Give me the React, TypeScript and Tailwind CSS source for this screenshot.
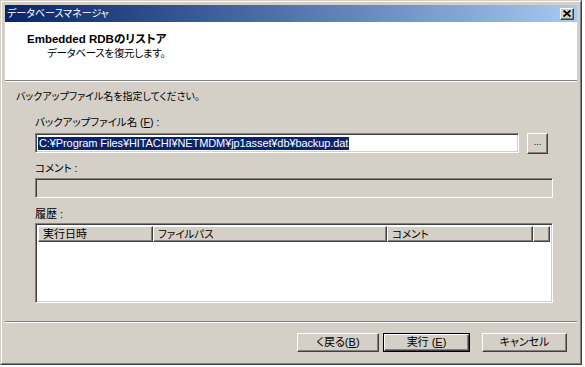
import React from 'react';

const font = "[font-family:'Liberation_Sans','Noto_Sans_CJK_JP',sans-serif] [font-feature-settings:'palt']";

const sunken =
  'border border-t-[#808080] border-l-[#808080] border-r-white border-b-white shadow-[inset_1px_1px_0_#404040,inset_-1px_-1px_0_#d4d0c8]';

const raised =
  'border border-t-white border-l-white border-r-[#404040] border-b-[#404040] shadow-[inset_-1px_-1px_0_#808080]';

const Key: React.FC<{ k: string }> = ({ k }) => <span className="underline underline-offset-1">{k}</span>;

const Button: React.FC<{ w: string; primary?: boolean; children: React.ReactNode }> = ({ w, primary, children }) => (
  <div className={`${w} h-[19px] ${primary ? 'border border-black' : ''}`}>
    <div className={`w-full h-full ${raised} bg-[#d4d0c8] flex items-center justify-center text-[11px] leading-none`}>
      {children}
    </div>
  </div>
);

const App: React.FC = () => {
  return (
    <div className={`w-[585px] h-[367px] bg-white ${font} text-black`}>
      {/* window frame */}
      <div className="w-[582px] h-[365px] border border-t-[#d4d0c8] border-l-[#d4d0c8] border-r-[#404040] border-b-[#404040]">
        <div className="w-full h-full border border-t-white border-l-white border-r-[#808080] border-b-[#808080] bg-[#d4d0c8] p-[3px] flex flex-col">
          {/* title bar */}
          <div className="h-[17px] bg-linear-to-r from-[#0a246a] to-[#a6caf0] flex items-center justify-between pl-[2px] pr-[3px]">
            <span className="text-white text-[10px] leading-none">データベースマネージャ</span>
            <div className={`w-[14px] h-[12px] ${raised} bg-[#d4d0c8] flex items-center justify-center`}>
              <svg width="8" height="7" viewBox="0 0 8 7">
                <path d="M0.5 0.5 L7.5 6.5 M7.5 0.5 L0.5 6.5" stroke="#000" strokeWidth="1.8" />
              </svg>
            </div>
          </div>

          {/* header */}
          <div className="h-[58px] bg-white pl-[22px] pt-[10px]">
            <div className="text-[11.5px] font-bold leading-[14px]">Embedded RDBのリストア</div>
            <div className="text-[10.5px] leading-[14px] pl-[20px] tracking-[-0.3px]">データベースを復元します。</div>
          </div>
          <div className="h-px bg-[#808080]" />
          <div className="h-px bg-white" />

          {/* body */}
          <div className="h-[239px] pl-[11px] pt-[8px]">
            <div className="text-[10px] leading-[14px]">バックアップファイル名を指定してください。</div>
            <div className="pl-[19px]">
              <div className="text-[10.5px] leading-[14px] mt-[11px]">
                バックアップファイル名 (<Key k="F" />) :
              </div>
              <div className="flex items-start gap-[8px] mt-[4px]">
                <div className={`w-[484px] h-[20px] bg-white ${sunken} flex items-center pl-[2px]`}>
                  <span className="bg-[#0a246a] text-white text-[11px] leading-[13px] px-px [font-family:'Liberation_Sans',sans-serif] tracking-[-0.1px]">
                    C:¥Program Files¥HITACHI¥NETMDM¥jp1asset¥db¥backup.dat
                  </span>
                </div>
                <div className={`w-[21px] h-[21px] ${raised} bg-[#d4d0c8] flex items-center justify-center text-[9px] leading-none pb-[3px]`}>
                  ...
                </div>
              </div>
              <div className="text-[10.5px] leading-[14px] mt-[7px]">コメント :</div>
              <div className={`w-[518px] h-[20px] bg-[#d4d0c8] ${sunken} mt-[3px]`} />
              <div className="text-[11px] leading-[14px] mt-[9px]">履歴 :</div>
              <div className={`w-[518px] h-[80px] bg-white ${sunken} mt-[2px] p-[2px]`}>
                <div className="flex h-[16px] text-[11px] leading-none">
                  <div className={`w-[115px] ${raised} bg-[#d4d0c8] flex items-center pl-[4px]`}>実行日時</div>
                  <div className={`w-[234px] ${raised} bg-[#d4d0c8] flex items-center pl-[4px] text-[10.5px]`}>ファイルパス</div>
                  <div className={`w-[146px] ${raised} bg-[#d4d0c8] flex items-center pl-[4px] text-[10.5px]`}>コメント</div>
                  <div className={`flex-1 ${raised} bg-[#d4d0c8]`} />
                </div>
              </div>
            </div>
          </div>

          {/* footer */}
          <div className="h-px bg-[#808080]" />
          <div className="h-px bg-white" />
          <div className="flex justify-end items-center pt-[10px] pr-[10px]">
            <Button w="w-[82px]">
              く戻る(<Key k="B" />)
            </Button>
            <div className="ml-[4px]">
              <Button w="w-[87px]" primary>
                実行 (<Key k="E" />)
              </Button>
            </div>
            <div className="ml-[12px]">
              <Button w="w-[85px]">キャンセル</Button>
            </div>
          </div>
        </div>
      </div>
    </div>
  );
};

export default App;
